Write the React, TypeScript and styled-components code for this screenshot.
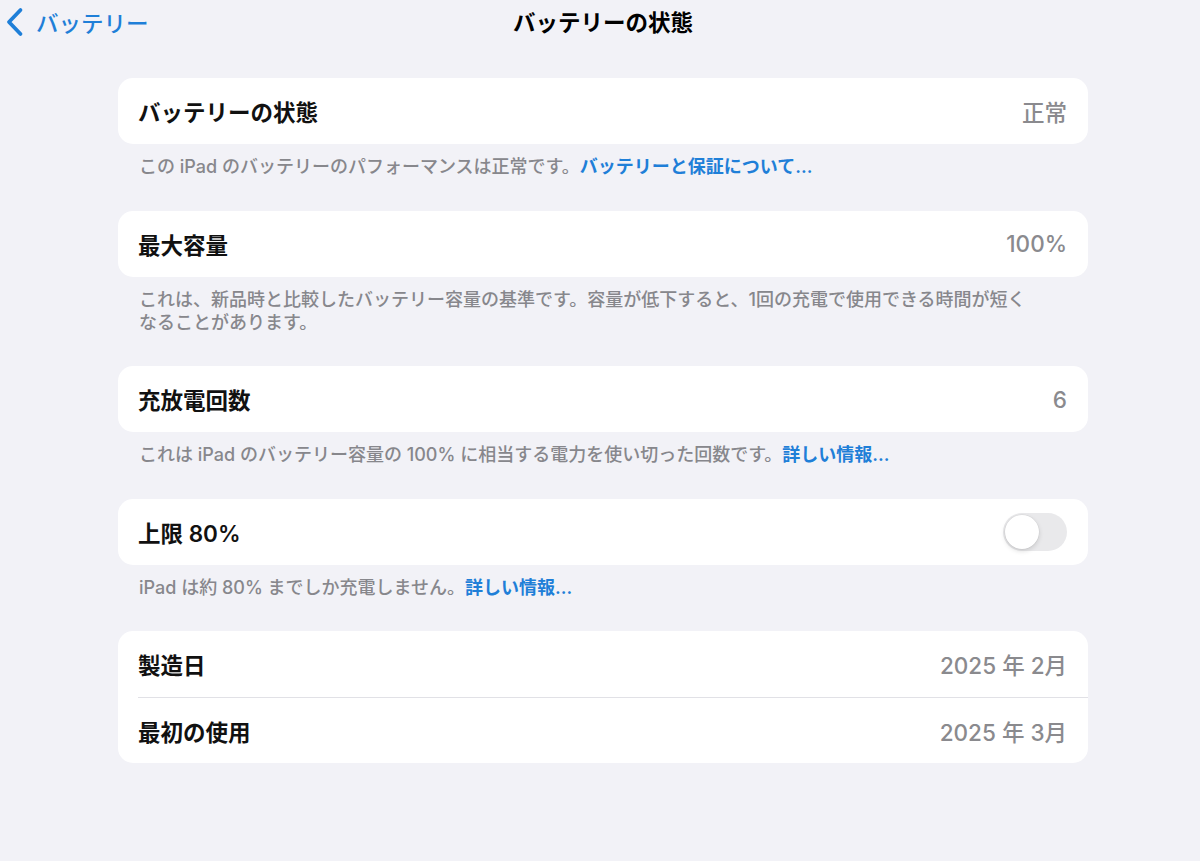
import React, { useState } from 'react';
import styled, { createGlobalStyle } from 'styled-components';

const GlobalStyle = createGlobalStyle`
  html, body {
    margin: 0;
    padding: 0;
    background: #f2f2f7;
  }
  body {
    font-family: Inter, "Noto Sans CJK JP", "Noto Sans", sans-serif;
    color: #000;
    -webkit-font-smoothing: antialiased;
  }
`;

const Page = styled.div`
  width: 1200px;
  height: 861px;
  background: #f2f2f7;
  overflow: hidden;
`;

const Header = styled.header`
  display: grid;
  grid-template-columns: 1fr auto 1fr;
  align-items: center;
  height: 44px;
  padding: 0 6px;
`;

const BackButton = styled.button`
  display: flex;
  align-items: center;
  gap: 12px;
  justify-self: start;
  border: none;
  background: none;
  padding: 0;
  cursor: pointer;
  color: #1f7fd8;
  font-family: inherit;
  font-size: 22.5px;
  font-weight: 500;
`;

const Title = styled.h1`
  margin: -2px 0 0 6px;
  font-size: 22.5px;
  font-weight: 700;
`;

const Content = styled.main`
  width: 970px;
  padding: 34px 0 0 118px;
`;

const Section = styled.section`
  margin-bottom: 32.5px;
`;

const Card = styled.div`
  background: #fff;
  border-radius: 15px;
  overflow: hidden;
`;

const Row = styled.div<{ $divider?: boolean }>`
  display: flex;
  align-items: center;
  justify-content: space-between;
  height: 66px;
  margin-left: 20px;
  padding-right: 21px;
  border-top: ${(p) => (p.$divider ? '1px solid #e1e1e6' : 'none')};
  box-sizing: border-box;
`;

const Label = styled.span`
  font-size: 22.5px;
  font-weight: 600;
  color: #111;
`;

const Value = styled.span`
  font-size: 22.5px;
  font-weight: 500;
  color: #8a8a8e;
`;

const Footer = styled.p`
  margin: 0;
  padding: 11px 0 0 21px;
  max-width: 893px;
  font-size: 18px;
  line-height: 23px;
  font-weight: 500;
  color: #87878c;
`;

const Link = styled.a`
  color: #1f7fd8;
  font-weight: 600;
  text-decoration: none;
`;

const Track = styled.button<{ $on: boolean }>`
  display: flex;
  align-items: center;
  width: 64px;
  height: 38px;
  padding: 2px;
  border: none;
  border-radius: 19px;
  background: ${(p) => (p.$on ? '#34c759' : '#e9e9eb')};
  justify-content: ${(p) => (p.$on ? 'flex-end' : 'flex-start')};
  cursor: pointer;
  box-sizing: border-box;
`;

const Knob = styled.span`
  width: 34px;
  height: 34px;
  border-radius: 50%;
  background: #fff;
  box-shadow: 0 2px 5px rgba(0, 0, 0, 0.14), 0 0 0 0.5px rgba(0, 0, 0, 0.06);
`;

const Chevron = () => (
  <svg width="18" height="30" viewBox="0 0 18 30" fill="none">
    <path d="M14.5 3 L3 15 L14.5 27" stroke="#1f7fd8" strokeWidth="3.8" strokeLinecap="round" strokeLinejoin="round" />
  </svg>
);

const App: React.FC = () => {
  const [limit, setLimit] = useState(false);

  return (
    <Page>
      <GlobalStyle />
      <Header>
        <BackButton>
          <Chevron />
          バッテリー
        </BackButton>
        <Title>バッテリーの状態</Title>
        <span />
      </Header>

      <Content>
        <Section>
          <Card>
            <Row>
              <Label>バッテリーの状態</Label>
              <Value>正常</Value>
            </Row>
          </Card>
          <Footer>
            この iPad のバッテリーのパフォーマンスは正常です。<Link>バッテリーと保証について...</Link>
          </Footer>
        </Section>

        <Section>
          <Card>
            <Row>
              <Label>最大容量</Label>
              <Value>100%</Value>
            </Row>
          </Card>
          <Footer>
            これは、新品時と比較したバッテリー容量の基準です。容量が低下すると、1回の充電で使用できる時間が短くなることがあります。
          </Footer>
        </Section>

        <Section>
          <Card>
            <Row>
              <Label>充放電回数</Label>
              <Value>6</Value>
            </Row>
          </Card>
          <Footer>
            これは iPad のバッテリー容量の 100% に相当する電力を使い切った回数です。<Link>詳しい情報...</Link>
          </Footer>
        </Section>

        <Section>
          <Card>
            <Row>
              <Label>上限 80%</Label>
              <Track $on={limit} onClick={() => setLimit(!limit)} aria-label="上限 80%">
                <Knob />
              </Track>
            </Row>
          </Card>
          <Footer>
            iPad は約 80% までしか充電しません。<Link>詳しい情報...</Link>
          </Footer>
        </Section>

        <Section>
          <Card>
            <Row>
              <Label>製造日</Label>
              <Value>2025 年 2月</Value>
            </Row>
            <Row $divider>
              <Label>最初の使用</Label>
              <Value>2025 年 3月</Value>
            </Row>
          </Card>
        </Section>
      </Content>
    </Page>
  );
};

export default App;
